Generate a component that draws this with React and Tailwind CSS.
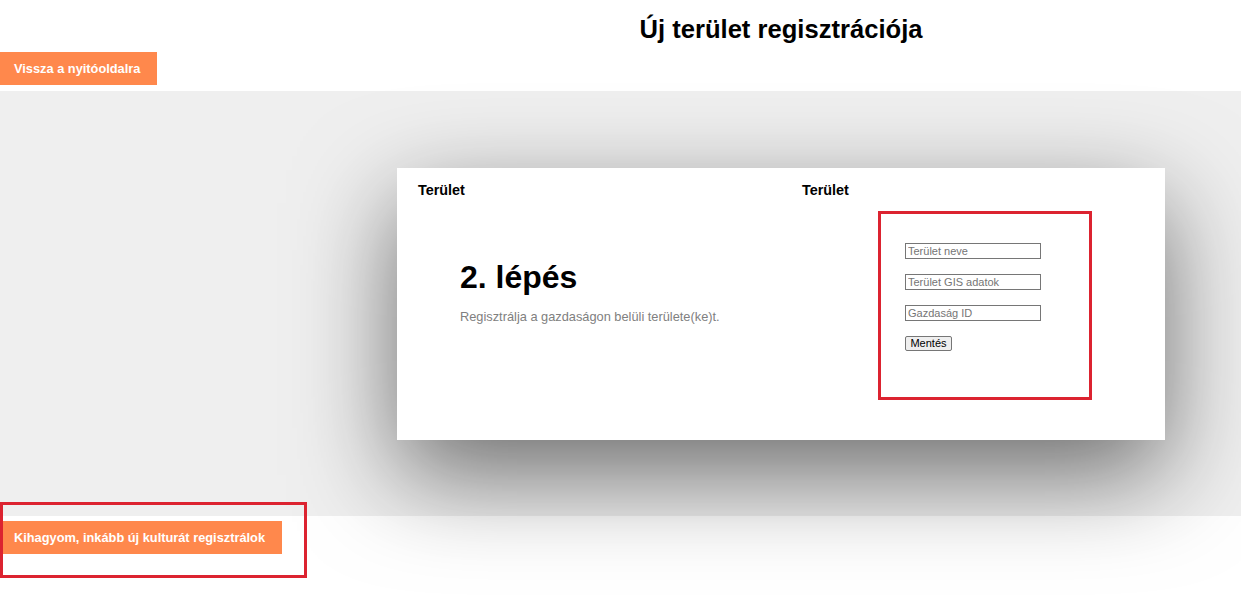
export default function App() {
  return (
    <div className="relative min-h-screen bg-white font-['Liberation_Sans',Arial,sans-serif] text-black">
      {/* Header */}
      <div className="pl-[321px] pt-[14.5px] text-center">
        <h1 className="text-[25.6px] font-bold leading-[29.5px]">Új terület regisztrációja</h1>
      </div>
      <div className="mt-[8px]">
        <button className="h-[33px] bg-[#ff884c] pl-[14px] pr-[17px] text-[12.8px] font-bold text-white">
          Vissza a nyitóoldalra
        </button>
      </div>

      {/* Step section */}
      <section className="mt-[6px] flex h-[425px] items-center justify-center bg-[#efefef] pl-[321px]">
        <div className="grid h-[272px] w-[768px] grid-cols-2 bg-white shadow-[0_35px_100px_rgba(0,0,0,0.55)]">
          <div className="px-[21px] pt-[14px]">
            <h3 className="text-[14.4px] font-bold leading-[16.5px]">Terület</h3>
            <div className="mt-[61px] pl-[42px]">
              <h2 className="text-[32px] font-bold leading-[37px]">2. lépés</h2>
              <p className="mt-[13px] text-[12.8px] leading-[15px] text-[#808080]">
                Regisztrálja a gazdaságon belüli területe(ke)t.
              </p>
            </div>
          </div>
          <div className="px-[21px] pt-[14px]">
            <h3 className="text-[14.4px] font-bold leading-[16.5px]">Terület</h3>
            <form className="mx-auto mt-[45px] flex w-[136px] flex-col items-start gap-[15px]">
              <input
                placeholder="Terület neve"
                className="h-[16px] w-[136px] border border-[#767676] px-[2px] text-[11px] outline-none placeholder:text-[#757575]"
              />
              <input
                placeholder="Terület GIS adatok"
                className="h-[16px] w-[136px] border border-[#767676] px-[2px] text-[11px] outline-none placeholder:text-[#757575]"
              />
              <input
                placeholder="Gazdaság ID"
                className="h-[16px] w-[136px] border border-[#767676] px-[2px] text-[11px] outline-none placeholder:text-[#757575]"
              />
              <button
                type="button"
                className="h-[15px] w-[47px] rounded-[2px] border border-[#767676] bg-[#efefef] text-[11px] leading-[13px]"
              >
                Mentés
              </button>
            </form>
          </div>
        </div>
      </section>

      <div className="mt-[5px]">
        <button className="h-[33px] bg-[#ff884c] pl-[14px] pr-[17px] text-[12.8px] font-bold text-white">
          Kihagyom, inkább új kulturát regisztrálok
        </button>
      </div>

      {/* highlight frames */}
      <div className="pointer-events-none absolute left-[878px] top-[211px] h-[189px] w-[214px] border-[3px] border-[#dc2330]" />
      <div className="pointer-events-none absolute left-0 top-[502px] h-[76px] w-[307px] border-[3px] border-[#dc2330]" />
    </div>
  );
}
